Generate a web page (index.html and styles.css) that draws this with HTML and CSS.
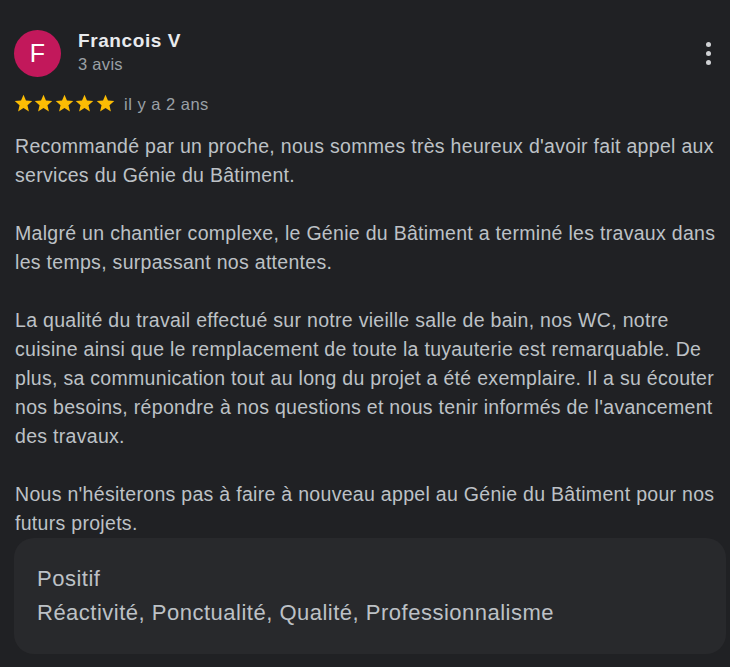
FILE: index.html
```html
<!DOCTYPE html>
<html lang="fr">
<head>
    <meta charset="UTF-8">
    <meta name="viewport" content="width=device-width, initial-scale=1.0">
    <link rel="stylesheet" href="styles.css">
</head>
<body>
<div class="review">
    <div class="review-header">
        <div class="avatar">F</div>
        <div class="author">
            <div class="author-name">Francois V</div>
            <div class="author-meta">3 avis</div>
        </div>
        <div class="menu-btn">
            <span class="dot"></span>
            <span class="dot"></span>
            <span class="dot"></span>
        </div>
    </div>

    <div class="rating-row">
        <span class="stars">
            <svg viewBox="0 0 24 24"><path d="M12 17.27 18.18 21l-1.64-7.03L22 9.24l-7.19-.61L12 2 9.19 8.63 2 9.24l5.46 4.73L5.82 21z"/></svg>
            <svg viewBox="0 0 24 24"><path d="M12 17.27 18.18 21l-1.64-7.03L22 9.24l-7.19-.61L12 2 9.19 8.63 2 9.24l5.46 4.73L5.82 21z"/></svg>
            <svg viewBox="0 0 24 24"><path d="M12 17.27 18.18 21l-1.64-7.03L22 9.24l-7.19-.61L12 2 9.19 8.63 2 9.24l5.46 4.73L5.82 21z"/></svg>
            <svg viewBox="0 0 24 24"><path d="M12 17.27 18.18 21l-1.64-7.03L22 9.24l-7.19-.61L12 2 9.19 8.63 2 9.24l5.46 4.73L5.82 21z"/></svg>
            <svg viewBox="0 0 24 24"><path d="M12 17.27 18.18 21l-1.64-7.03L22 9.24l-7.19-.61L12 2 9.19 8.63 2 9.24l5.46 4.73L5.82 21z"/></svg>
        </span>
        <span class="review-date">il y a 2 ans</span>
    </div>

    <div class="review-text">
        Recommandé par un proche, nous sommes très heureux d'avoir fait appel aux services du Génie du Bâtiment.<br><br>
        Malgré un chantier complexe, le Génie du Bâtiment a terminé les travaux dans les temps, surpassant nos attentes.<br><br>
        La qualité du travail effectué sur notre vieille salle de bain, nos WC, notre cuisine ainsi que le remplacement de toute la tuyauterie est remarquable. De plus, sa communication tout au long du projet a été exemplaire. Il a su écouter nos besoins, répondre à nos questions et nous tenir informés de l'avancement des travaux.<br><br>
        Nous n'hésiterons pas à faire à nouveau appel au Génie du Bâtiment pour nos futurs projets.
    </div>

    <div class="highlights">
        <div class="highlights-title">Positif</div>
        <div class="highlights-list">Réactivité, Ponctualité, Qualité, Professionnalisme</div>
    </div>
</div>
</body>
</html>
```

FILE: styles.css
```css
body {
    margin: 0;
    background: #202124;
    font-family: "Liberation Sans", Arial, sans-serif;
    color: #bdc1c6;
}

.review {
    padding: 30px 4px 0 14px;
}

.review-header {
    display: flex;
    align-items: flex-start;
}

.avatar {
    width: 47px;
    height: 47px;
    border-radius: 50%;
    background: #c2185b;
    color: #fff;
    font-size: 25px;
    display: flex;
    align-items: center;
    justify-content: center;
    flex-shrink: 0;
}

.author {
    margin-left: 17px;
    flex: 1;
}

.author-name {
    color: #e8eaed;
    font-size: 19px;
    font-weight: bold;
    line-height: 22px;
    letter-spacing: 0.6px;
}

.author-meta {
    margin-top: 2px;
    color: #9aa0a6;
    font-size: 16.5px;
    line-height: 20px;
    letter-spacing: 0.3px;
}

.menu-btn {
    display: flex;
    flex-direction: column;
    gap: 4px;
    margin: 12px 15px 0 0;
}

.dot {
    width: 5px;
    height: 5px;
    border-radius: 50%;
    background: #d0d2d5;
}

.rating-row {
    display: flex;
    align-items: center;
    margin-top: 16px;
    height: 20px;
}

.stars {
    display: flex;
    margin-left: -1.5px;
}

.stars svg {
    width: 21px;
    height: 21px;
    fill: #fbbc04;
    margin-right: -0.5px;
}

.review-date {
    margin-left: 9px;
    padding-top: 2px;
    color: #9aa0a6;
    font-size: 16.5px;
    line-height: 20px;
    letter-spacing: 0.5px;
}

.review-text {
    margin-top: 19px;
    padding-left: 1px;
    font-size: 19.5px;
    line-height: 29px;
    letter-spacing: 0.3px;
}

.highlights {
    background: #28292c;
    border-radius: 20px;
    padding: 24px 22px 24px 23px;
    font-size: 22px;
    line-height: 34px;
    letter-spacing: 0.5px;
}
```
